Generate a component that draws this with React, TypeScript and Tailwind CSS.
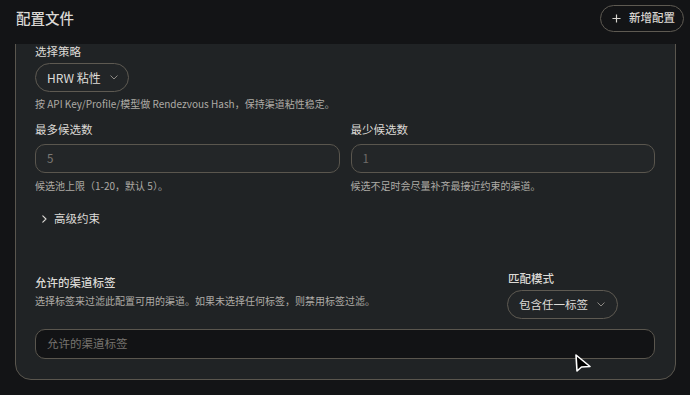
import React from "react";

const font = { fontFamily: '"Noto Sans CJK SC", "Noto Sans", sans-serif' };

function Chevron({ className = "" }: { className?: string }) {
  return (
    <svg width="8" height="5" viewBox="0 0 8 5" className={className} fill="none">
      <path d="M0.8 0.8 L4 4 L7.2 0.8" stroke="currentColor" strokeWidth="1" strokeLinecap="round" strokeLinejoin="round" />
    </svg>
  );
}

export default function App() {
  return (
    <div className="w-[690px] h-[395px] bg-[#131416] flex flex-col overflow-hidden relative" style={font}>
      <div className="h-[36px] flex items-center justify-between pl-[16px] pr-[6px] shrink-0">
        <div className="text-[14.5px] font-medium text-[#dad8d4] leading-none">配置文件</div>
        <button className="h-[27px] flex items-center pl-[11px] pr-[8px] rounded-full border border-[#5e5a52] text-[#d8d5d0] text-[11.5px] leading-none font-medium">
          <svg width="9" height="9" viewBox="0 0 10 10" className="mr-[8px]">
            <path d="M5 0.5 V9.5 M0.5 5 H9.5" stroke="currentColor" strokeWidth="1.3" />
          </svg>
          新增配置
        </button>
      </div>
      <div className="mt-[8px] flex-1 overflow-hidden">
        <div className="-mt-[40px] ml-[15px] mr-[14px] bg-[#202325] border border-[#5a564e] rounded-2xl pt-[38px] pl-[19px] pr-[20px] pb-[20px]">
          <div className="text-[11.5px] leading-[16px] text-[#dcdad6]">选择策略</div>
          <button className="mt-[4px] h-[29px] w-[94px] flex items-center pl-[11px] rounded-full border border-[#5e5a52] bg-[#222527] text-[12px] text-[#dedcd8]">
            <span>HRW 粘性</span>
            <Chevron className="ml-[9px] text-[#8d8a85]" />
          </button>
          <div className="mt-[4px] text-[10px] leading-[16px] text-[#aeaba5]">按 API Key/Profile/模型做 Rendezvous Hash，保持渠道粘性稳定。</div>

          <div className="mt-[9px] grid grid-cols-2 gap-x-[11px]">
            <div>
              <div className="text-[11.5px] leading-[16px] text-[#dcdad6]">最多候选数</div>
              <div className="mt-[7px] h-[29px] rounded-[10px] border border-[#5a564e] bg-[#232628] flex items-center pl-[11px] text-[11.5px] text-[#7c7974]">5</div>
              <div className="mt-[5px] text-[10px] leading-[16px] text-[#aeaba5]">候选池上限（1-20，默认 5）。</div>
            </div>
            <div>
              <div className="text-[11.5px] leading-[16px] text-[#dcdad6]">最少候选数</div>
              <div className="mt-[7px] h-[29px] rounded-[10px] border border-[#5a564e] bg-[#232628] flex items-center pl-[11px] text-[11.5px] text-[#6f6c68]">1</div>
              <div className="mt-[5px] text-[10px] leading-[16px] text-[#aeaba5]">候选不足时会尽量补齐最接近约束的渠道。</div>
            </div>
          </div>

          <div className="mt-[16px] h-[18px] flex items-center pl-[7px] text-[11.5px] text-[#dcdad6]">
            <svg width="5" height="8" viewBox="0 0 5 8" fill="none" className="mr-[7px]">
              <path d="M0.8 0.8 L4 4 L0.8 7.2" stroke="currentColor" strokeWidth="1.1" strokeLinecap="round" strokeLinejoin="round" />
            </svg>
            高级约束
          </div>

          <div className="mt-[42px] flex justify-between items-start">
            <div className="pt-[4px]">
              <div className="text-[11.5px] leading-[16px] text-[#dcdad6] font-medium">允许的渠道标签</div>
              <div className="mt-[3px] text-[10px] leading-[16px] text-[#aeaba5]">选择标签来过滤此配置可用的渠道。如果未选择任何标签，则禁用标签过滤。</div>
            </div>
            <div className="w-[148px]">
              <div className="text-[11.5px] leading-[16px] text-[#dcdad6] font-medium pl-[1px]">匹配模式</div>
              <button className="mt-[4px] h-[29px] w-[111px] flex items-center pl-[11px] rounded-full border border-[#5e5a52] bg-[#222527] text-[11.5px] text-[#dedcd8]">
                <span>包含任一标签</span>
                <Chevron className="ml-[9px] text-[#8d8a85]" />
              </button>
            </div>
          </div>
          <div className="mt-[10px] h-[30px] rounded-[10px] border border-[#5a564e] bg-[#121315] flex items-center pl-[11px] text-[11.5px] text-[#77746f]">允许的渠道标签</div>
        </div>
      </div>
      <svg width="18" height="20" viewBox="0 0 18 20" className="absolute left-[574px] top-[353px]">
        <path d="M2 2 L3 18 L7.5 14 L16 13.5 Z" fill="#000" stroke="#fff" strokeWidth="1.6" strokeLinejoin="round" />
      </svg>
    </div>
  );
}
